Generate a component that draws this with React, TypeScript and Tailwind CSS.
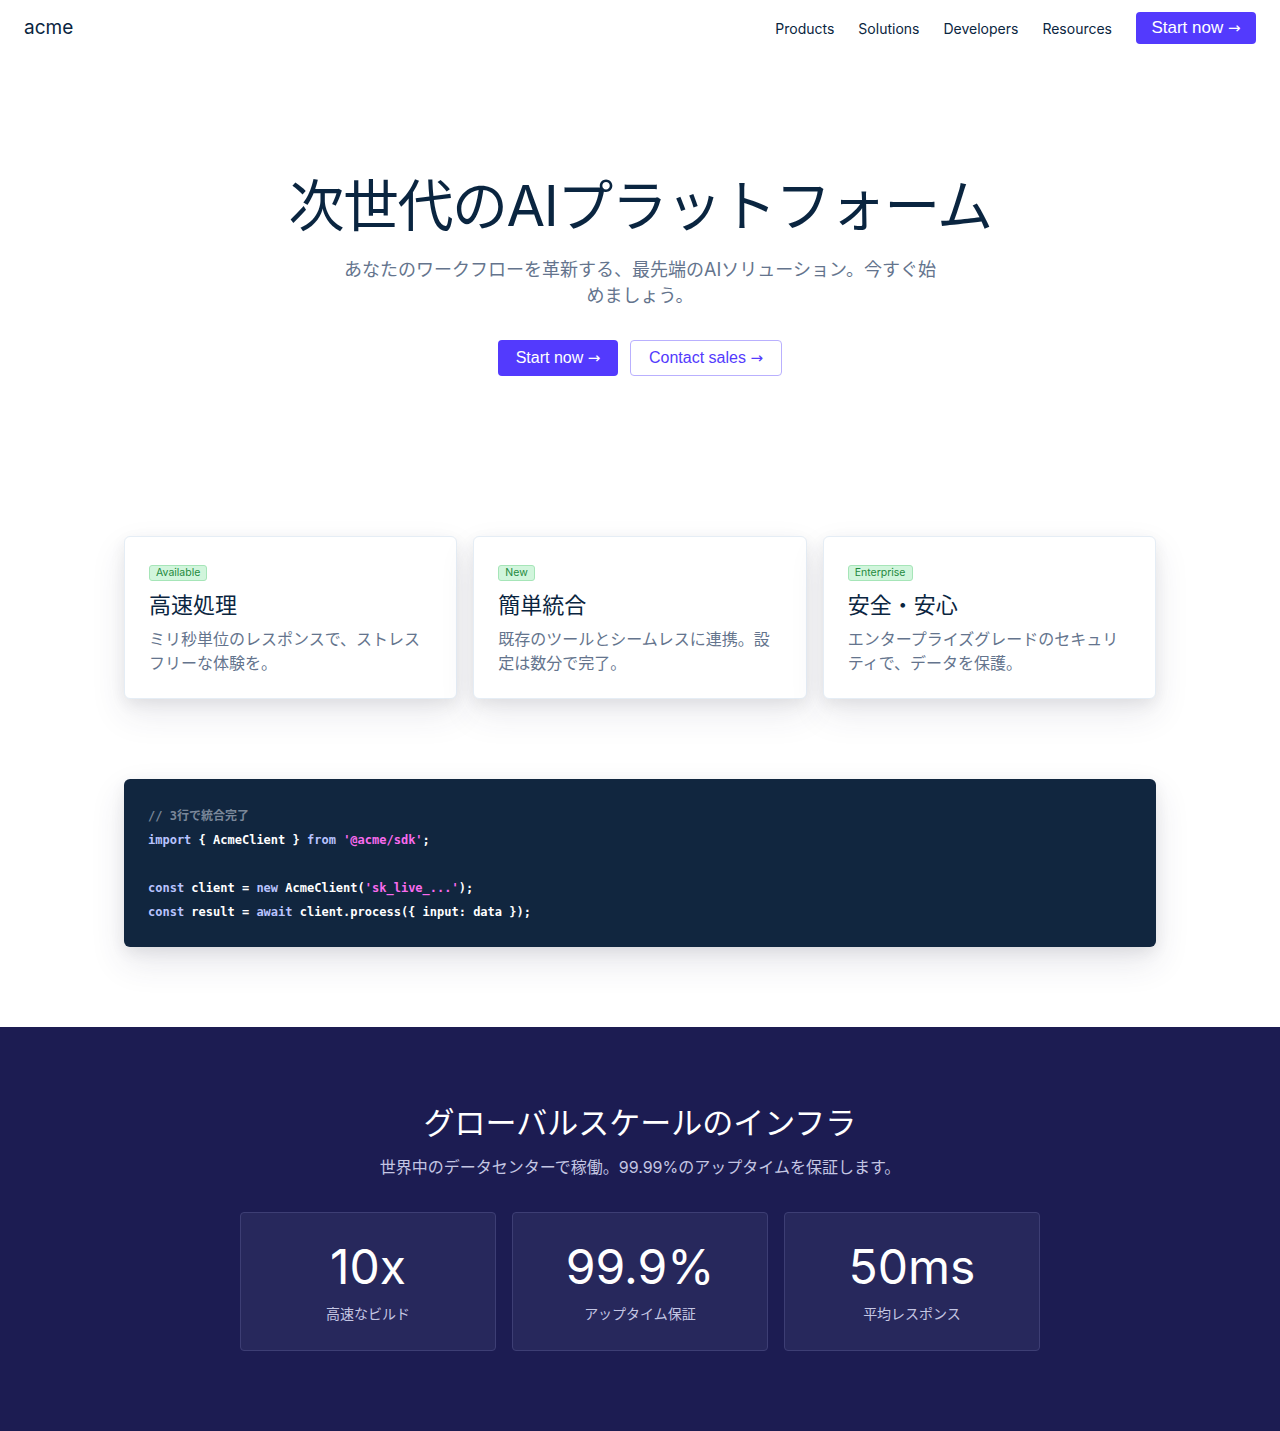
const sans = "font-['Inter','Noto_Sans_CJK_JP',sans-serif]";
const btnFont = "font-['Liberation_Sans','Noto_Sans_CJK_JP',sans-serif]";

type Feature = {
  badge: string;
  title: string;
  text: string;
};

type Stat = {
  value: string;
  label: string;
};

const features: Feature[] = [
  { badge: 'Available', title: '高速処理', text: 'ミリ秒単位のレスポンスで、ストレスフリーな体験を。' },
  { badge: 'New', title: '簡単統合', text: '既存のツールとシームレスに連携。設定は数分で完了。' },
  { badge: 'Enterprise', title: '安全・安心', text: 'エンタープライズグレードのセキュリティで、データを保護。' },
];

const stats: Stat[] = [
  { value: '10x', label: '高速なビルド' },
  { value: '99.9%', label: 'アップタイム保証' },
  { value: '50ms', label: '平均レスポンス' },
];

// the arrow glyph from DejaVu is longer, closer to the reference
const Arrow = () => <span className="font-['DejaVu_Sans',sans-serif] text-[15px]">→</span>;

const App: React.FC = () => {
  return (
    <div className={`${sans} bg-white min-h-[1431px] text-[#0a2540]`}>
      {/* header */}
      <header className="flex items-center justify-between h-[56px] px-6">
        <span className="text-[19px] text-[#0a2540]">acme</span>
        <nav className="flex items-center">
          <a className="text-[14px] text-[#0a2540] mr-6">Products</a>
          <a className="text-[14px] text-[#0a2540] mr-6">Solutions</a>
          <a className="text-[14px] text-[#0a2540] mr-6">Developers</a>
          <a className="text-[14px] text-[#0a2540] mr-6">Resources</a>
          <button className={`${btnFont} h-[32px] w-[120px] rounded-[4px] bg-[#533afd] text-white text-[17px]`}>
            Start now <Arrow />
          </button>
        </nav>
      </header>

      {/* hero */}
      <section className="flex flex-col items-center pt-[114px]">
        <h1 className="text-[56px] leading-[72px] font-normal tracking-[-1.5px] text-[#0a2540]">
          次世代のAIプラットフォーム
        </h1>
        <p className="mt-[15px] w-[600px] text-center text-[18px] leading-[26px] text-[#64748d]">
          あなたのワークフローを革新する、最先端のAIソリューション。今すぐ始めましょう。
        </p>
        <div className="flex gap-3 mt-[31px]">
          <button className={`${btnFont} h-[36px] w-[120px] rounded-[4px] bg-[#533afd] text-white text-[16px]`}>
            Start now <Arrow />
          </button>
          <button className={`${btnFont} h-[36px] w-[152px] rounded-[4px] border border-[#b9b0fe] bg-white text-[#533afd] text-[16px]`}>
            Contact sales <Arrow />
          </button>
        </div>
      </section>

      {/* features */}
      <section className="w-[1032px] mx-auto mt-[160px] grid grid-cols-3 gap-4">
        {features.map((f) => (
          <div
            key={f.title}
            className="rounded-[6px] border border-[#e5edf5] bg-white px-6 pt-[28px] pb-[23px] shadow-[0_15px_35px_rgba(50,50,93,0.1),0_5px_15px_rgba(0,0,0,0.07)]"
          >
            <div className="flex">
              <span className="flex items-center h-[16px] rounded-[3px] border border-[#a6e5b8] bg-[#d1f5dc] px-[6px] text-[10.5px] text-[#1f8a3e]">
                {f.badge}
              </span>
            </div>
            <h3 className="mt-[10px] text-[22px] leading-[28px] font-normal text-[#0a2540]">{f.title}</h3>
            <p className="mt-[8px] text-[16px] leading-[24px] text-[#64748d]">{f.text}</p>
          </div>
        ))}
      </section>

      {/* code */}
      <section className="w-[1032px] mx-auto mt-[80px]">
        <pre className="rounded-[6px] bg-[#11263f] px-6 pt-[25px] pb-[23px] font-['DejaVu_Sans_Mono','Noto_Sans_CJK_JP',monospace] text-[12px] leading-[24px] font-bold text-white shadow-[0_15px_35px_rgba(50,50,93,0.12),0_5px_15px_rgba(0,0,0,0.07)]">
          <div className="text-[#7a8799]">// 3行で統合完了</div>
          <div>
            <span className="text-[#b8c3fe]">import</span> {'{ AcmeClient }'}{' '}
            <span className="text-[#b8c3fe]">from</span>{' '}
            <span className="text-[#f96bee]">'@acme/sdk'</span>;
          </div>
          <div>&nbsp;</div>
          <div>
            <span className="text-[#b8c3fe]">const</span> client = <span className="text-[#b8c3fe]">new</span>{' '}
            AcmeClient(<span className="text-[#f96bee]">'sk_live_...'</span>);
          </div>
          <div>
            <span className="text-[#b8c3fe]">const</span> result = <span className="text-[#b8c3fe]">await</span>{' '}
            client.process({'{ input: data }'});
          </div>
        </pre>
      </section>

      {/* stats */}
      <section className="mt-[80px] bg-[#1c1c52] pt-[76px] pb-[80px] flex flex-col items-center">
        <h2 className="text-[31px] leading-[40px] font-normal text-white">グローバルスケールのインフラ</h2>
        <p className="mt-[12px] text-[16px] leading-[24px] text-[#c4c6e3]">
          世界中のデータセンターで稼働。99.99%のアップタイムを保証します。
        </p>
        <div className="mt-[33px] grid grid-cols-3 gap-4 w-[800px]">
          {stats.map((s) => (
            <div
              key={s.label}
              className="flex flex-col items-center rounded-[4px] border border-[#3d3e74] bg-[#27285c] pt-[24px] pb-[26px]"
            >
              <div className="text-[48px] leading-[60px] text-white">{s.value}</div>
              <div className="mt-[7px] text-[14px] leading-[20px] text-[#c4c6e3]">{s.label}</div>
            </div>
          ))}
        </div>
      </section>
    </div>
  );
};

export default App;
